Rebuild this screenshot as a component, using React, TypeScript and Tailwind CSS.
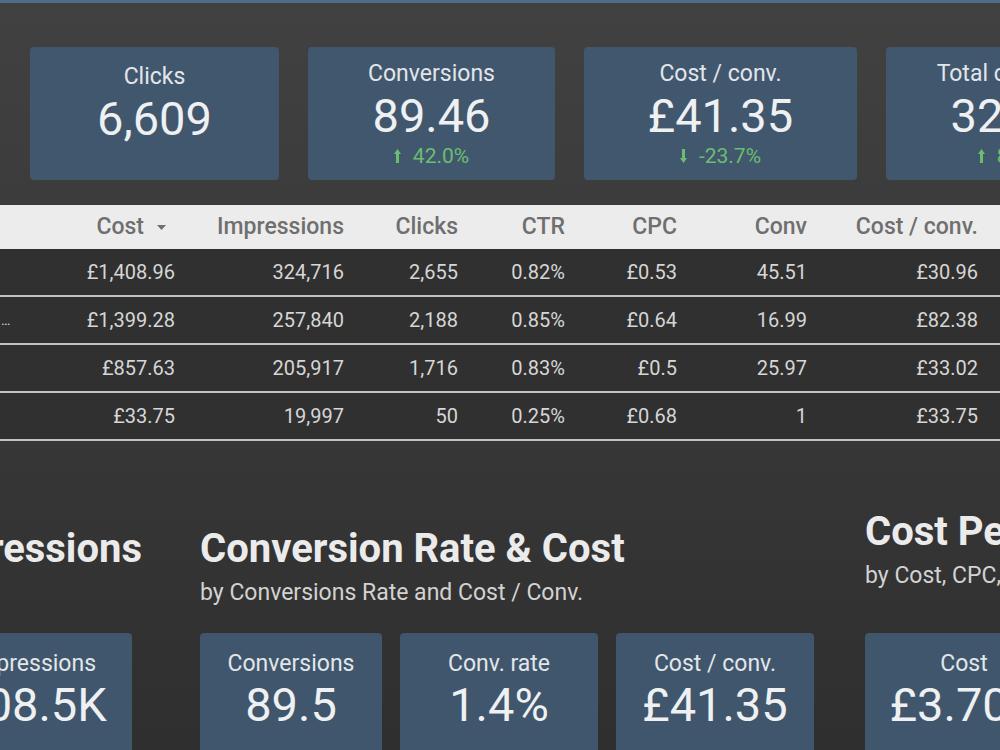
import React from 'react';

type Kpi = {
  label: string;
  value: string;
  change?: string;
  up?: boolean;
  width: string;
  pad: string;
};

const topKpis: Kpi[] = [
  { label: 'Clicks', value: '6,609', width: 'w-[249px]', pad: 'pt-[16px]' },
  { label: 'Conversions', value: '89.46', change: '42.0%', up: true, width: 'w-[247px]', pad: 'pt-[13px]' },
  { label: 'Cost / conv.', value: '£41.35', change: '-23.7%', up: false, width: 'w-[273px]', pad: 'pt-[13px]' },
  { label: 'Total conv. val', value: '32.45', change: '8.6%', up: true, width: 'w-[247px]', pad: 'pt-[13px]' },
];

const columns = ['', 'Cost', 'Impressions', 'Clicks', 'CTR', 'CPC', 'Conv', 'Cost / conv.'];

const rows = [
  ['', '£1,408.96', '324,716', '2,655', '0.82%', '£0.53', '45.51', '£30.96'],
  ['…', '£1,399.28', '257,840', '2,188', '0.85%', '£0.64', '16.99', '£82.38'],
  ['', '£857.63', '205,917', '1,716', '0.83%', '£0.5', '25.97', '£33.02'],
  ['', '£33.75', '19,997', '50', '0.25%', '£0.68', '1', '£33.75'],
];

const gridCols = 'grid grid-cols-[60px_115px_169px_114px_107px_112px_130px_171px_1fr]';

function Arrow({ up }: { up: boolean }) {
  return (
    <svg width="7" height="14" viewBox="0 0 7 14" className="fill-[#6cbd6f]">
      {up ? <path d="M3.5 0 L7 5 H5 V14 H2 V5 H0 Z" /> : <path d="M3.5 14 L7 9 H5 V0 H2 V9 H0 Z" />}
    </svg>
  );
}

function KpiCard({ kpi }: { kpi: Kpi }) {
  return (
    <div className={`${kpi.width} shrink-0 h-[133px] rounded-[4px] bg-[#41576e] ${kpi.pad} flex flex-col items-center`}>
      <div className="text-[23px] leading-[28px] text-[#e2e6ea] whitespace-nowrap">{kpi.label}</div>
      <div className="mt-[3px] text-[47px] leading-[50px] text-[#eef0f2] whitespace-nowrap">{kpi.value}</div>
      {kpi.change && (
        <div className="mt-[3px] flex items-center gap-[12px] text-[21px] leading-[24px] text-[#6cbd6f]">
          <Arrow up={!!kpi.up} />
          <span>{kpi.change}</span>
        </div>
      )}
    </div>
  );
}

function SmallCard({ label, value, width }: { label: string; value: string; width: string }) {
  return (
    <div className={`${width} shrink-0 h-[140px] rounded-[4px] bg-[#3f566c] pt-[17px] flex flex-col items-center`}>
      <div className="text-[23px] leading-[28px] text-[#e2e6ea] whitespace-nowrap">{label}</div>
      <div className="mt-[2px] text-[47px] leading-[50px] text-[#eef0f2] whitespace-nowrap">{value}</div>
    </div>
  );
}

function SectionTitle({ title, subtitle }: { title: string; subtitle?: string }) {
  return (
    <div>
      <div className="text-[40px] leading-[46px] font-bold text-[#ebebeb] whitespace-nowrap">{title}</div>
      <div className="mt-[7px] h-[28px] text-[23px] leading-[28px] text-[#d2d2d2] whitespace-nowrap">{subtitle}</div>
    </div>
  );
}

export default function App() {
  return (
    <div
      className="w-[1000px] h-[750px] overflow-hidden border-t-[3px] border-[#4f6d8a] bg-gradient-to-b from-[#414141] to-[#2f2f2f]"
      style={{ fontFamily: 'Roboto, "Noto Sans", sans-serif' }}
    >
      {/* scorecards */}
      <div className="flex gap-[29px] pl-[30px] pt-[44px]">
        {topKpis.map((k) => (
          <KpiCard key={k.label} kpi={k} />
        ))}
      </div>

      {/* campaign table */}
      <div className="mt-[25px]">
        <div className={`${gridCols} h-[44px] items-center bg-[#ececec] text-[23px] font-medium text-[#6f6f6f]`}>
          {columns.map((c, i) => (
            <div key={i} className="text-right whitespace-nowrap">
              {c === 'Cost' ? (
                <span className="inline-flex items-center gap-[13px] mr-[9px]">
                  Cost
                  <svg width="9" height="5" viewBox="0 0 9 5" className="fill-[#6f6f6f]">
                    <path d="M0 0 H9 L4.5 5 Z" />
                  </svg>
                </span>
              ) : (
                c
              )}
            </div>
          ))}
          <div />
        </div>
        {rows.map((r, ri) => (
          <div
            key={ri}
            className={`${gridCols} h-[48px] items-center bg-[#303030] border-b-2 border-[#c2c2c2] text-[20px] text-[#d6d6d6]`}
          >
            {r.map((v, ci) => (
              <div key={ci} className={ci === 0 ? 'text-left text-[14px] pl-[1px]' : 'text-right whitespace-nowrap'}>
                {v}
              </div>
            ))}
            <div />
          </div>
        ))}
      </div>

      {/* breakdown sections */}
      <div className="mt-[85px] flex">
        <div className="ml-[-118px] w-[260px] shrink-0 flex flex-col items-end">
          <SectionTitle title="Impressions" />
          <div className="mt-[26px] mr-[10px]">
            <SmallCard label="Impressions" value="308.5K" width="w-[198px]" />
          </div>
        </div>

        <div className="ml-[58px] w-[614px] shrink-0">
          <SectionTitle title="Conversion Rate & Cost" subtitle="by Conversions Rate and Cost / Conv." />
          <div className="mt-[26px] flex gap-[18px]">
            <SmallCard label="Conversions" value="89.5" width="w-[182px]" />
            <SmallCard label="Conv. rate" value="1.4%" width="w-[198px]" />
            <SmallCard label="Cost / conv." value="£41.35" width="w-[198px]" />
          </div>
        </div>

        <div className="ml-[51px] mt-[-17px] shrink-0">
          <SectionTitle title="Cost Per Click" subtitle="by Cost, CPC, and CTR" />
          <div className="mt-[43px] flex gap-[18px]">
            <SmallCard label="Cost" value="£3.70K" width="w-[198px]" />
          </div>
        </div>
      </div>
    </div>
  );
}
